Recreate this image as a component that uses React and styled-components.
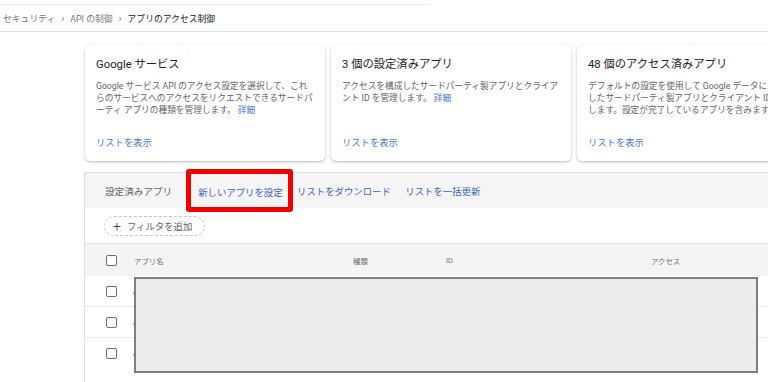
import styled, { createGlobalStyle } from "styled-components"

const Global = createGlobalStyle`
  body {
    margin: 0;
    background: #fff;
    overflow: hidden;
    font-family: "Roboto", "Noto Sans CJK JP", sans-serif;
  }
`

const cards = [
  {
    title: "Google サービス",
    lines: [
      "Google サービス API のアクセス設定を選択して、これ",
      "らのサービスへのアクセスをリクエストできるサードパ",
      "ーティ アプリの種類を管理します。",
    ],
  },
  {
    title: "3 個の設定済みアプリ",
    lines: [
      "アクセスを構成したサードパーティ製アプリとクライア",
      "ント ID を管理します。",
    ],
  },
  {
    title: "48 個のアクセス済みアプリ",
    lines: [
      "デフォルトの設定を使用して Google データにアクセス",
      "したサードパーティ製アプリとクライアント ID を管理",
      "します。設定が完了しているアプリを含みます。",
    ],
    noMore: true,
  },
]

const App = () => {
  return (
    <>
      <Global />
      <TopRule />
      <Crumbs>
        <Crumb>セキュリティ</Crumb>
        <Sep>›</Sep>
        <Crumb>API の制御</Crumb>
        <Sep>›</Sep>
        <Crumb current>アプリのアクセス制御</Crumb>
      </Crumbs>

      <Main>
        <Cards>
          {cards.map((c) => (
            <Card key={c.title}>
              <CardTitle>{c.title}</CardTitle>
              <CardText>
                {c.lines.map((l, i) => (
                  <span key={i}>
                    {l}
                    {i === c.lines.length - 1 && !c.noMore && <Link>詳細</Link>}
                    {i < c.lines.length - 1 && <br />}
                  </span>
                ))}
              </CardText>
              <CardLink>リストを表示</CardLink>
            </Card>
          ))}
        </Cards>

        <Panel>
          <Toolbar>
            <ToolLabel>設定済みアプリ</ToolLabel>
            <ToolLinks>
              <Highlighted>
                <ToolLink>新しいアプリを設定</ToolLink>
              </Highlighted>
              <ToolLink>リストをダウンロード</ToolLink>
              <ToolLink>リストを一括更新</ToolLink>
            </ToolLinks>
          </Toolbar>

          <FilterRow>
            <Chip>
              <Plus>+</Plus>
              フィルタを追加
            </Chip>
          </FilterRow>

          <HeadRow>
            <Cell><Box /></Cell>
            <HeadText>アプリ名</HeadText>
            <HeadText>種類</HeadText>
            <HeadText>ID</HeadText>
            <HeadText>アクセス</HeadText>
          </HeadRow>

          <Body>
            {[0, 1, 2].map((r) => (
              <Row key={r} last={r === 2}>
                <Cell><Box /></Cell>
                <AppName>App</AppName>
              </Row>
            ))}
            <Redact />
          </Body>
        </Panel>
      </Main>
    </>
  )
}

export default App

const TopRule = styled.div`
  width: 430px;
  height: 1px;
  margin-top: 4px;
  background: #eeeeee;
`

const Crumbs = styled.div`
  height: 26px;
  display: flex;
  align-items: center;
  padding-left: 3px;
  border-bottom: 1px solid #e3e3e3;
`

const Crumb = styled.span`
  font-size: 8.8px;
  color: ${(p) => (p.current ? "#202124" : "#70757a")};
`

const Sep = styled.span`
  font-size: 10px;
  color: #80868b;
  margin: 0 6px;
`

const Main = styled.div`
  padding: 13px 0 0 85px;
`

const Cards = styled.div`
  display: flex;
  gap: 6px;
`

const Card = styled.div`
  flex: 0 0 240px;
  height: 116px;
  box-sizing: border-box;
  padding: 13px 11px 12px;
  border-radius: 5px;
  background: #fff;
  box-shadow: 0 1px 2px rgba(60, 64, 67, 0.25), 0 1px 4px rgba(60, 64, 67, 0.12);
  display: flex;
  flex-direction: column;
`

const CardTitle = styled.div`
  font-size: 11.3px;
  line-height: 14px;
  color: #202124;
  white-space: nowrap;
`

const CardText = styled.div`
  margin-top: 8px;
  font-size: 8.7px;
  line-height: 12px;
  color: #5f6368;
  white-space: nowrap;
`

const Link = styled.span`
  color: #3b6fd8;
  margin-left: 2px;
`

const CardLink = styled.div`
  margin-top: auto;
  font-size: 9.3px;
  line-height: 12px;
  color: #4a78dc;
`

const Panel = styled.div`
  margin: 11px 0 0 -1px;
  border-top: 1px solid #e0e0e0;
  border-left: 1px solid #e0e0e0;
  min-height: 220px;
`

const Toolbar = styled.div`
  height: 35px;
  background: #f5f5f5;
  display: flex;
  align-items: center;
  padding-left: 20px;
`

const ToolLabel = styled.span`
  font-size: 9.6px;
  color: #5f6368;
`

const ToolLinks = styled.div`
  display: flex;
  align-items: center;
  gap: 14.5px;
  margin-left: 26px;
`

const ToolLink = styled.span`
  font-size: 9.4px;
  color: #3b63c6;
`

const Highlighted = styled.span`
  position: relative;

  &::after {
    content: "";
    position: absolute;
    left: -12px;
    right: -10px;
    top: -12px;
    bottom: -12px;
    border: 5px solid #f20000;
    border-radius: 3px;
  }
`

const FilterRow = styled.div`
  height: 35px;
  display: flex;
  align-items: center;
  padding-left: 19px;
  border-bottom: 1px solid #e3e3e3;
`

const Chip = styled.span`
  height: 20px;
  width: 101px;
  box-sizing: border-box;
  display: flex;
  align-items: center;
  padding-left: 8px;
  border: 1px dashed #c6c6c6;
  border-radius: 10px;
  font-size: 9.4px;
  color: #5f6368;
`

const Plus = styled.span`
  font-size: 14px;
  font-weight: 300;
  line-height: 1;
  margin-right: 6px;
  color: #444;
`

const grid = `
  display: grid;
  grid-template-columns: 49px 219px 93px 205px 1fr;
  align-items: center;
`

const HeadRow = styled.div`
  ${grid}
  height: 32px;
  background: #f4f4f4;
`

const Cell = styled.div`
  padding-left: 21px;
  display: flex;
  align-items: center;
`

const Box = styled.span`
  width: 11px;
  height: 11px;
  box-sizing: border-box;
  border: 1.5px solid #6f6f6f;
  border-radius: 2px;
  background: #fff;
`

const HeadText = styled.span`
  font-size: 7.4px;
  color: #6f6f6f;
`

const Body = styled.div`
  position: relative;
`

const Row = styled.div`
  ${grid}
  height: 30px;
  border-bottom: ${(p) => (p.last ? "none" : "1px solid #e6e6e6")};
`

const AppName = styled.span`
  font-size: 9px;
  color: #3b63c6;
  margin-left: -1px;
`

const Redact = styled.div`
  position: absolute;
  left: 49px;
  top: 1px;
  width: 624px;
  height: 96px;
  box-sizing: border-box;
  background: #ececec;
  border: 2px solid #7f7f7f;
`
